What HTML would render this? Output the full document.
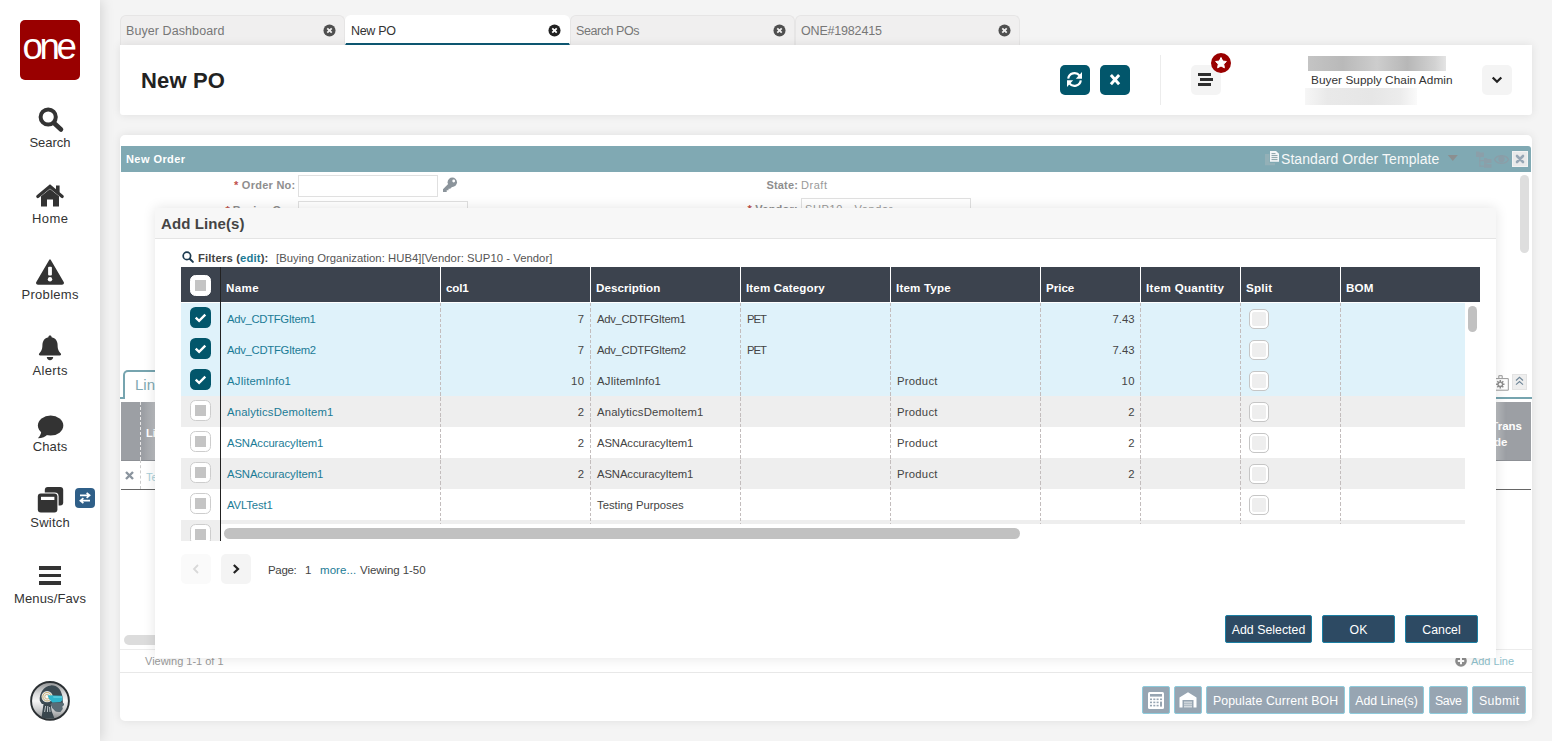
<!DOCTYPE html>
<html lang="en">
<head>
<meta charset="utf-8">
<title>New PO</title>
<style>
*{box-sizing:border-box;margin:0;padding:0}
html,body{width:1552px;height:741px;overflow:hidden}
body{background:#f4f4f4;font-family:"Liberation Sans",sans-serif;font-size:12px;color:#333;position:relative}
.abs{position:absolute}
.t{position:absolute;white-space:nowrap;line-height:1}
#side{position:absolute;left:0;top:0;width:100px;height:741px;background:#fff;box-shadow:2px 0 12px rgba(0,0,0,.13)}
#logo{position:absolute;left:20px;top:20px;width:60px;height:60px;background:#990000;border-radius:5px;overflow:hidden}
.nav{position:absolute;left:0;width:100px;text-align:center;font-size:13px;color:#333;line-height:1;white-space:nowrap}
.tab{position:absolute;top:15px;height:30px;width:225px;background:#f0efef;border:1px solid #e6e5e5;border-bottom:none;border-radius:6px 6px 0 0;color:#777}
.tab span{position:absolute;left:5px;top:8px;line-height:14px;white-space:nowrap}
.tab.on{background:#fff;color:#333;border-color:#fff;border-bottom:2px solid #0d5670;z-index:2}
.tab svg{position:absolute;right:8.500px;top:7.500px}
#hdr{position:absolute;left:120px;top:45px;width:1412px;height:70px;background:#fff;border-radius:0 0 3px 3px;box-shadow:0 0 10px rgba(0,0,0,.09)}
#main{position:absolute;left:120px;top:135px;width:1412px;height:586px;background:#fff;border-radius:5px;box-shadow:0 0 10px rgba(0,0,0,.09);overflow:hidden}
#dlg{position:absolute;left:155px;top:208px;width:1341px;height:450px;background:#fff;box-shadow:0 0 12px rgba(0,0,0,.11)}
.tbtn{position:absolute;height:28px;background:#97a5b2;border:1px solid #8ecbdc;border-radius:2px;color:#fff;line-height:28px;text-align:center;white-space:nowrap}
.dbtn{position:absolute;height:28px;background:#2d4a63;border:1px solid #1b7fa3;border-radius:2px;color:#fff;line-height:28px;text-align:center;white-space:nowrap}
.hc{position:absolute;top:0;height:35px;border-left:1px solid #fff;color:#fff;font-weight:700;line-height:35px;padding-left:5px;white-space:nowrap;padding-top:3px}
.row{position:absolute;left:0;height:31px;width:1284px}
.cell{position:absolute;top:0;height:31px;line-height:31px;color:#444;white-space:nowrap;padding-top:1px}
.lnk{color:#1b7b96}
.cb{position:absolute;width:21px;height:21px;border-radius:5.500px;background:#fff;border:1px solid #cdcdcd}
.cb i{position:absolute;left:4px;top:4px;width:11px;height:11px;background:#c4c4c4}
.cbon{position:absolute;width:21px;height:21px;border-radius:5.500px;background:#02566b}
.sp{position:absolute;width:20px;height:20px;border-radius:5px;background:#eee;border:1px solid #c6c6c6;box-shadow:inset 0 0 0 2px #fff}
.vd{position:absolute;top:0;width:1px;background:repeating-linear-gradient(180deg,#c3bdbd 0,#c3bdbd 3.250px,transparent 3.250px,transparent 5.250px)}
</style>
</head>
<body>
<div id="side">
  <div id="logo"><span class="t" style="left:-11.700px;top:8.500px;width:80px;text-align:center;font-size:36px;color:#fff;letter-spacing:-3.400px;transform:scaleX(1.02)">one</span></div>
  <svg class="abs" style="left:36px;top:105px" width="30" height="30" viewBox="0 0 30 30"><circle cx="12.200" cy="12" r="7.600" fill="none" stroke="#333" stroke-width="4"/><line x1="18" y1="18" x2="25" y2="24.500" stroke="#333" stroke-width="4.600" stroke-linecap="round"/></svg>
  <div class="nav" style="top:135.6px;letter-spacing:0.001px;padding-left:0.001px">Search</div>
  <svg class="abs" style="left:35px;top:184px" width="30" height="24" viewBox="0 0 30 24"><path d="M2.800 12.500 L15 2.400 L27.200 12.500" fill="none" stroke="#333" stroke-width="3.200" stroke-linecap="round" stroke-linejoin="miter"/><path d="M6 12.200 L15 5 L24 12.200 V22.500 H18 V15.500 H12 V22.500 H6 Z" fill="#333"/><rect x="21" y="1.500" width="3.600" height="7" fill="#333"/></svg>
  <div class="nav" style="top:211.6px;letter-spacing:0.48px;padding-left:0.48px">Home</div>
  <svg class="abs" style="left:35px;top:258px" width="30" height="28" viewBox="0 0 30 28"><path d="M15 2.200 L28 24.300 Q28.600 26 26.800 26 H3.200 Q1.400 26 2 24.300 Z" fill="#333" stroke="#333" stroke-width="1.600" stroke-linejoin="round"/><rect x="13.100" y="8.800" width="3.800" height="8.800" rx="1" fill="#fff"/><circle cx="15" cy="21.200" r="2.200" fill="#fff"/></svg>
  <div class="nav" style="top:287.6px;letter-spacing:0.299px;padding-left:0.299px">Problems</div>
  <svg class="abs" style="left:36px;top:334px" width="28" height="28" viewBox="0 0 28 28"><path d="M14 1.600 c1 0 1.600 .7 1.600 1.700 c4 .9 6 4 6 8 c0 4.500 1.400 6.400 3.200 8.200 c.7 .8 .2 2 -1 2 H4.200 c-1.200 0 -1.700 -1.200 -1 -2 c1.800 -1.800 3.200 -3.700 3.200 -8.200 c0 -4 2 -7.100 6 -8 c0 -1 .6 -1.700 1.600 -1.700 Z" fill="#333"/><path d="M10.800 23 h6.400 c0 1.800 -1.400 3.200 -3.200 3.200 s-3.200 -1.400 -3.200 -3.200 Z" fill="#333"/></svg>
  <div class="nav" style="top:363.6px;letter-spacing:0.345px;padding-left:0.345px">Alerts</div>
  <svg class="abs" style="left:36px;top:413.700px" width="30" height="26" viewBox="0 0 30 26"><path d="M5.500 16 Q5 21.500 1.800 24.200 Q8.500 24 11.500 20.500 Z" fill="#333"/><ellipse cx="14.600" cy="11.600" rx="12.700" ry="10" fill="#333"/></svg>
  <div class="nav" style="top:439.6px;letter-spacing:0.088px;padding-left:0.088px">Chats</div>
  <svg class="abs" style="left:36px;top:485px" width="30" height="30" viewBox="0 0 30 30"><rect x="8.800" y="2" width="18.400" height="18.600" rx="3" fill="#333"/><rect x="0.600" y="7.400" width="22" height="21.400" rx="4" fill="#fff"/><rect x="1.800" y="8.600" width="19.600" height="19" rx="3" fill="#333"/><rect x="5" y="11.800" width="13.400" height="3.200" fill="#fff"/></svg>
  <div class="abs" style="left:75px;top:488px;width:20px;height:20px;border-radius:4px;background:#2f5f88"></div>
  <svg class="abs" style="left:75px;top:488px" width="20" height="20" viewBox="0 0 20 20"><path d="M5 7.300 H13.200 M11.600 4.800 L14.600 7.300 L11.600 9.800" fill="none" stroke="#fff" stroke-width="1.700"/><path d="M15 12.700 H6.800 M8.400 10.200 L5.400 12.700 L8.400 15.200" fill="none" stroke="#fff" stroke-width="1.700"/></svg>
  <div class="nav" style="top:515.6px;letter-spacing:0.252px;padding-left:0.252px">Switch</div>
  <div class="abs" style="left:39px;top:566px;width:22px;height:3.600px;background:#333"></div>
  <div class="abs" style="left:39px;top:573.700px;width:22px;height:3.600px;background:#333"></div>
  <div class="abs" style="left:39px;top:581.400px;width:22px;height:3.600px;background:#333"></div>
  <div class="nav" style="top:591.6px;letter-spacing:0.13px;padding-left:0.13px">Menus/Favs</div>
  <svg class="abs" style="left:29px;top:680px" width="42" height="42" viewBox="0 0 42 42">
    <defs><linearGradient id="av" x1="0" y1="0" x2="0" y2="1"><stop offset="0" stop-color="#8f9192"/><stop offset=".3" stop-color="#d9dadb"/><stop offset=".5" stop-color="#f6f6f6"/><stop offset=".72" stop-color="#cfd0d1"/><stop offset="1" stop-color="#838687"/></linearGradient><clipPath id="avc"><circle cx="21" cy="20.900" r="18.600"/></clipPath></defs>
    <circle cx="21" cy="20.900" r="18.900" fill="url(#av)" stroke="#2b3033" stroke-width="1.900"/>
    <g clip-path="url(#avc)">
    <path d="M14.500 24 L12.400 38.500 L25.500 38.500 L22.600 31 L21.800 24 Z" fill="#39464d"/>
    <path d="M16.600 26 L15.600 32 M18.800 26 L18.400 32 M20.600 27 L21 32" stroke="#cfd6d8" stroke-width=".9"/>
    <path d="M10.800 20.800 C10 13 15 6 21.800 5.400 C28 5 32 9 33.500 16.700 L33.900 22.400 L35.100 24.800 L33.100 26.400 L33.500 28.900 L31.100 32.100 L26.600 31.300 L23.400 28.100 L21.800 24 L12.900 24 Z" fill="#3b4a52"/>
    <path d="M21.800 24 L23.400 28.100 L26.600 31.300 L31.100 32.100 L33.500 28.900 L33.100 26.400 L35.100 24.800 L33.900 22.400 L23.400 22.400 Z" fill="#5a6c75"/>
    <circle cx="18.100" cy="16.700" r="5.600" fill="#e8ebea"/>
    <circle cx="18.100" cy="16.700" r="4.300" fill="none" stroke="#c2a766" stroke-width=".9"/>
    <circle cx="18.100" cy="16.700" r="2.300" fill="#fbfbf6" stroke="#b99f63" stroke-width=".7"/>
    <path d="M18.500 15.300 L33.100 15.700 L33.500 20 L31.500 22 L23.400 22.400 L20.100 19.100 Z" fill="#2fb6cd"/>
    <path d="M24 16 L33 16.300 L33.200 18 L24.500 18 Z" fill="#6fd6e6" opacity=".6"/>
    </g>
  </svg>
</div>
<div id="tabs">
  <div class="tab" style="left:120px"><span style="font-size:12.500px;letter-spacing:0.081px">Buyer Dashboard</span><svg width="13" height="13" viewBox="0 0 14 14"><circle cx="7" cy="7" r="6.500" fill="#4f4f4f"/><path d="M4.600 4.600 L9.400 9.400 M9.400 4.600 L4.600 9.400" stroke="#f0efef" stroke-width="1.900"/></svg></div>
  <div class="tab on" style="left:345px"><span style="font-size:12.500px;letter-spacing:-0.307px">New PO</span><svg width="13" height="13" viewBox="0 0 14 14"><circle cx="7" cy="7" r="6.500" fill="#222"/><path d="M4.600 4.600 L9.400 9.400 M9.400 4.600 L4.600 9.400" stroke="#fff" stroke-width="1.900"/></svg></div>
  <div class="tab" style="left:570px"><span style="font-size:12.500px;letter-spacing:-0.439px">Search POs</span><svg width="13" height="13" viewBox="0 0 14 14"><circle cx="7" cy="7" r="6.500" fill="#4f4f4f"/><path d="M4.600 4.600 L9.400 9.400 M9.400 4.600 L4.600 9.400" stroke="#f0efef" stroke-width="1.900"/></svg></div>
  <div class="tab" style="left:795px"><span style="font-size:12.500px;letter-spacing:-0.182px">ONE#1982415</span><svg width="13" height="13" viewBox="0 0 14 14"><circle cx="7" cy="7" r="6.500" fill="#4f4f4f"/><path d="M4.600 4.600 L9.400 9.400 M9.400 4.600 L4.600 9.400" stroke="#f0efef" stroke-width="1.900"/></svg></div>
</div>
<div id="hdr">
  <div class="t" style="left:21px;top:25px;font-size:22px;color:#222;font-weight:700;letter-spacing:0.144px;">New PO</div>
  <div class="abs" style="left:940px;top:20px;width:30px;height:30px;border-radius:5px;background:#02566b"></div>
  <svg class="abs" style="left:940px;top:20px" width="30" height="30" viewBox="0 0 30 30"><path d="M8.200 13.650 A6.400 6.400 0 0 1 19.600 10.600" fill="none" stroke="#fff" stroke-width="2.200"/><path d="M22 7 V13.650 H15.800 Z" fill="#fff"/><path d="M20.800 15.350 A6.400 6.400 0 0 1 9.400 18.400" fill="none" stroke="#fff" stroke-width="2.200"/><path d="M7 22 V15.350 H13.200 Z" fill="#fff"/></svg>
  <div class="abs" style="left:980px;top:20px;width:30px;height:30px;border-radius:5px;background:#02566b"></div>
  <svg class="abs" style="left:980px;top:20px" width="30" height="30" viewBox="0 0 30 30"><path d="M10.900 10 L19.100 19.300 M19.100 10 L10.900 19.300" stroke="#fff" stroke-width="2.900"/></svg>
  <div class="abs" style="left:1040px;top:10px;width:1px;height:50px;background:#ececec"></div>
  <div class="abs" style="left:1071px;top:20px;width:30px;height:30px;border-radius:5px;background:#f4f4f4"></div>
  <div class="abs" style="left:1078px;top:28px;width:13px;height:2.600px;background:#2e2e2e"></div>
  <div class="abs" style="left:1080.200px;top:33.100px;width:12.800px;height:2.600px;background:#2e2e2e"></div>
  <div class="abs" style="left:1078px;top:38.400px;width:13px;height:2.600px;background:#2e2e2e"></div>
  <svg class="abs" style="left:1090px;top:7px" width="22" height="22" viewBox="0 0 22 22"><circle cx="11" cy="11" r="10" fill="#990000"/><path d="M11 5.500 L12.700 9 L16.400 9.500 L13.700 12.100 L14.400 15.800 L11 14 L7.600 15.800 L8.300 12.100 L5.600 9.500 L9.300 9 Z" fill="#fff" stroke="#fff" stroke-width="1" stroke-linejoin="round"/></svg>
  <div class="abs" style="left:1188px;top:11px;width:138px;height:15px;background:linear-gradient(90deg,#c4c4c4,#b9b9b9 25%,#cdcdcd 50%,#b7b7b7 72%,#d2d2d2 92%,#e4e4e4)"></div>
  <div class="t" style="left:1191px;top:30px;font-size:11.8px;color:#333;letter-spacing:0.051px;">Buyer Supply Chain Admin</div>
  <div class="abs" style="left:1185px;top:43px;width:112px;height:17px;background:linear-gradient(90deg,#f6f6f6,#e9e9e9 20%,#e6e6e6 60%,#ececec 85%,#fafafa)"></div>
  <div class="abs" style="left:1362px;top:20px;width:30px;height:30px;border-radius:5px;background:#f4f4f4"></div>
  <svg class="abs" style="left:1362px;top:20px" width="30" height="30" viewBox="0 0 30 30"><path d="M10.700 12.500 L15 16.700 L19.300 12.500" fill="none" stroke="#222" stroke-width="2.300"/></svg>
</div>
<div id="main">
  <div class="abs" style="left:1px;top:11px;width:1410px;height:26px;background:#80a9b3;border-radius:0 3px 0 0"></div>
  <div class="t" style="left:6px;top:18.8px;font-size:11px;color:#fff;font-weight:700;letter-spacing:0.43px;">New Order</div>
  <svg class="abs" style="left:1145px;top:14px" width="16" height="18" viewBox="0 0 16 18"><path d="M0 5 H4.500 V14 H10 V16.200 H0 Z" fill="#93b0b7"/><path d="M5 2 H11 L14 4.800 V12.700 H5 Z" fill="#f4f7f8"/><path d="M6.500 4.600 H10.500 M6.500 6.600 H12.500 M6.500 8.600 H12.500 M6.500 10.600 H12.500" stroke="#7c979e" stroke-width=".9"/></svg>
  <div class="t" style="left:1161px;top:17px;font-size:14px;color:#f6f8f8;letter-spacing:0.059px;">Standard Order Template</div>
  <svg class="abs" style="left:1327px;top:19px" width="12" height="8" viewBox="0 0 12 8"><path d="M.8 1 H10.800 L5.800 7 Z" fill="#8b8f90"/></svg>
  <svg class="abs" style="left:1355px;top:15px" width="36" height="18" viewBox="0 0 36 18"><g fill="#8b9fa9"><path d="M1 1.500 h3 l1 1 h4 v4.500 h-8z"/><path d="M9 8 h2.500 l1 1 h4 v4 h-7.500z"/><path d="M9 13.200 h2.500 l1 1 h4 v3.500 h-7.500z"/><path d="M4.200 7 h1.200 v8.500 h3.600 v1.200 h-4.800z"/><path d="M4.200 10 h4.800 v1.200 h-4.800z"/></g><path d="M19.500 9.500 C22 4.500 31 4.500 33.500 9.500 C31 14.500 22 14.500 19.500 9.500 Z" fill="none" stroke="#8a9ea8" stroke-width="1.500"/><circle cx="26.500" cy="9" r="3.200" fill="#8a9ea8"/></svg>
  <div class="abs" style="left:1392px;top:16px;width:16px;height:16px;background:#e9eaea;border:1px solid #f3f3f3"></div>
  <svg class="abs" style="left:1392px;top:16px" width="16" height="16" viewBox="0 0 16 16"><path d="M5 5 L11 11 M11 5 L5 11" stroke="#97a7b5" stroke-width="2.600" stroke-linecap="round"/></svg>
  <div class="abs" style="left:1400px;top:40px;width:9px;height:78px;border-radius:5px;background:#dedede"></div>
  <div class="t" style="left:-24.5px;top:44.8px;width:200px;text-align:right;font-size:11px;font-weight:700;color:#8e8e8e;letter-spacing:0.257px"><span style="color:#c0504d">*</span> Order No:</div>
  <div class="abs" style="left:178px;top:40px;width:140px;height:22px;border:1px solid #e0e0e0;background:#fff"></div>
  <svg class="abs" style="left:322px;top:42px" width="16" height="16" viewBox="0 0 16 16"><circle cx="10.300" cy="5.300" r="4.700" fill="#8b949b"/><path d="M6.600 6.400 L1 12.300 V14.900 H4.700 V13.300 H6.500 V11.700 H8.200 L10.800 9.300 Z" fill="#8b949b"/><circle cx="11.700" cy="4" r="1.400" fill="#fff"/></svg>
  <div class="t" style="left:-24.5px;top:70.3px;width:200px;text-align:right;font-size:11px;font-weight:700;color:#8e8e8e;letter-spacing:-0.068px"><span style="color:#c0504d">*</span> Buying Org:</div>
  <div class="abs" style="left:178px;top:66px;width:170px;height:22px;border:1px solid #e0e0e0;background:#fff"></div>
  <div class="t" style="left:478px;top:44.8px;width:200px;text-align:right;font-size:11px;font-weight:700;color:#8e8e8e;letter-spacing:0.156px">State:</div>
  <div class="t" style="left:681px;top:44.8px;font-size:11px;color:#999;letter-spacing:0.533px;">Draft</div>
  <div class="t" style="left:478px;top:68.5px;width:200px;text-align:right;font-size:11px;font-weight:700;color:#8e8e8e;letter-spacing:0.246px"><span style="color:#c0504d">*</span> Vendor:</div>
  <div class="abs" style="left:681px;top:63px;width:170px;height:22px;border:1px solid #e0e0e0;background:#fff"></div>
  <div class="t" style="left:685px;top:68.5px;font-size:11px;color:#999;letter-spacing:0.607px;">SUP10 - Vendor</div>
  <div class="abs" style="left:0;top:262px;width:1412px;height:2px;background:#76a4af"></div>
  <div class="abs" style="left:3px;top:235px;width:80px;height:29px;border:2px solid #76a4af;border-bottom:none;border-radius:5px 5px 0 0;background:#fff"></div>
  <div class="t" style="left:15px;top:242px;font-size:15px;color:#80a9b3;">Lines</div>
  <svg class="abs" style="left:1374px;top:239px" width="16" height="18" viewBox="0 0 16 18"><path d="M4.800 4.100 V1.700 H8.200 V4.100 M-2 4.600 H14.300 V16.200 H-2" fill="none" stroke="#9a9a9a" stroke-width="1"/><g stroke="#8f8f8f" stroke-width="1.500"><path d="M6.300 6.100 V14.500 M2.100 10.300 H10.500 M3.300 7.300 L9.300 13.300 M9.300 7.300 L3.300 13.300"/></g><circle cx="6.300" cy="10.300" r="2.900" fill="#8f8f8f"/><circle cx="6.300" cy="10.300" r="1.500" fill="#fff"/></svg>
  <div class="abs" style="left:1392px;top:239px;width:15px;height:15.500px;background:#eeeeee;border:1px solid #e3e3e3"></div>
  <svg class="abs" style="left:1392px;top:239px" width="15" height="16" viewBox="0 0 15 16"><path d="M4 6.500 L7.500 3.300 L11 6.500 M4 10.700 L7.500 7.500 L11 10.700" fill="none" stroke="#6f8698" stroke-width="1.100"/></svg>
  <div class="abs" style="left:1px;top:267px;width:1410px;height:58px;background:#9c9fa4"></div>
  <div class="abs" style="left:20px;top:267px;width:0;height:58px;border-left:1px dashed #e8e8e8"></div>
  <div class="t" style="left:26px;top:293px;font-size:11px;color:#fff;font-weight:700;">Line</div>
  <div class="t" style="left:1302px;top:282.8px;width:100px;text-align:right;font-size:11.500px;font-weight:700;color:#fff;line-height:16px">Trans</div>
  <div class="t" style="left:1287.5px;top:298.8px;width:100px;text-align:right;font-size:11.500px;font-weight:700;color:#fff;line-height:16px">Mode</div>
  <div class="abs" style="left:1376px;top:267px;width:10px;height:58px;background:linear-gradient(90deg,rgba(255,255,255,.3),rgba(255,255,255,0))"></div>
  <div class="abs" style="left:23px;top:267px;width:12px;height:58px;background:linear-gradient(270deg,rgba(255,255,255,.3),rgba(255,255,255,0))"></div>
  <div class="abs" style="left:1px;top:324.5px;width:1410px;height:1px;background:#8d9095"></div>
  <div class="abs" style="left:1px;top:354px;width:1410px;height:1px;background:#666"></div>
  <div class="abs" style="left:20px;top:325px;width:0;height:29px;border-left:1px dashed #ccc"></div>
  <svg class="abs" style="left:4px;top:335px" width="11" height="11" viewBox="0 0 11 11"><path d="M2 2 L9 9 M9 2 L2 9" stroke="#8a949e" stroke-width="2.400"/></svg>
  <div class="t" style="left:26px;top:337px;font-size:11px;color:#a9cfd9;">Test</div>
  <div class="abs" style="left:4px;top:500px;width:600px;height:10px;border-radius:5px;background:#dcdcdc"></div>
  <div class="abs" style="left:0;top:514px;width:1412px;height:1px;background:#ececec"></div>
  <div class="t" style="left:25px;top:521px;font-size:11px;color:#9a9a9a;letter-spacing:-0.011px;">Viewing 1-1 of 1</div>
  <svg class="abs" style="left:1335px;top:520px" width="12" height="12" viewBox="0 0 12 12"><circle cx="6" cy="6" r="5.800" fill="#8e8e8e"/><path d="M6 2.800 V9.200 M2.800 6 H9.200" stroke="#fff" stroke-width="2"/></svg>
  <div class="t" style="left:1351px;top:521px;font-size:11px;color:#8fbfcb;letter-spacing:-0.053px;">Add Line</div>
  <div class="abs" style="left:0;top:537px;width:1412px;height:1px;background:#e8e8e8"></div>
  <div class="tbtn" style="left:1086px;top:551px;width:139px;font-size:12.300px;letter-spacing:0.112px;padding-left:0.112px">Populate Current BOH</div>
  <div class="tbtn" style="left:1229px;top:551px;width:75px;font-size:12.300px;letter-spacing:-0.037px;padding-left:0px">Add Line(s)</div>
  <div class="tbtn" style="left:1308.5px;top:551px;width:39.5px;font-size:12.300px;letter-spacing:-0.384px;padding-left:0px">Save</div>
  <div class="tbtn" style="left:1352px;top:551px;width:54px;font-size:12.300px;letter-spacing:0.37px;padding-left:0.37px">Submit</div>
  <div class="tbtn" style="left:1022px;top:551px;width:28px"></div>
  <svg class="abs" style="left:1022px;top:551px" width="28" height="28" viewBox="0 0 28 28"><rect x="6" y="6" width="16" height="17" rx="1.500" fill="#fff"/><rect x="8" y="8" width="12" height="2.600" fill="#97a5b2"/><g fill="#97a5b2"><rect x="8" y="12.500" width="2" height="1.600"/><rect x="11.300" y="12.500" width="2" height="1.600"/><rect x="14.600" y="12.500" width="2" height="1.600"/><rect x="18" y="12.500" width="2" height="1.600"/><rect x="8" y="15.600" width="2" height="1.600"/><rect x="11.300" y="15.600" width="2" height="1.600"/><rect x="14.600" y="15.600" width="2" height="1.600"/><rect x="18" y="15.600" width="2" height="5"/><rect x="8" y="18.800" width="2" height="1.600"/><rect x="11.300" y="18.800" width="2" height="1.600"/><rect x="14.600" y="18.800" width="2" height="1.600"/></g></svg>
  <div class="tbtn" style="left:1054px;top:551px;width:28px"></div>
  <svg class="abs" style="left:1054px;top:551px" width="28" height="28" viewBox="0 0 28 28"><path d="M5.500 11.500 L14 6.200 L22.500 11.500 V21.500 H19.500 V14 H8.500 V21.500 H5.500 Z" fill="#fff"/><rect x="10" y="15.500" width="8" height="6" fill="#d5dbe0"/><path d="M10 17.300 H18 M10 19.300 H18" stroke="#97a5b2" stroke-width=".7"/></svg>
</div>
<div id="dlg">
  <div class="abs" style="left:0;top:0;width:1341px;height:31px;background:#f7f7f7;border-bottom:1px solid #e4e4e4"></div>
  <div class="t" style="left:6px;top:8px;font-size:15px;color:#444;font-weight:700;letter-spacing:0.091px;">Add Line(s)</div>
  <svg class="abs" style="left:26px;top:42px" width="14" height="14" viewBox="0 0 14 14"><circle cx="5.900" cy="5.900" r="3.700" fill="none" stroke="#1c3b50" stroke-width="1.700"/><path d="M8.700 8.700 L11.900 11.900" stroke="#1c3b50" stroke-width="2" stroke-linecap="round"/></svg>
  <div class="t" style="left:43px;top:44.8px;font-size:11.3px;color:#444;font-weight:700;letter-spacing:0.138px;">Filters (<span style="color:#1b7b96">edit</span>):</div>
  <div class="t" style="left:121px;top:44.8px;font-size:11.3px;color:#555;letter-spacing:0.039px;">[Buying Organization: HUB4][Vendor: SUP10 - Vendor]</div>
  <div class="abs" id="grid" style="left:26px;top:59px;width:1299px;height:274px;overflow:hidden">
    <div class="abs" style="left:0;top:0;width:1299px;height:35px;background:#3c434e"></div>
    <div class="hc" style="left:40px;width:219px;font-size:11.6px;letter-spacing:0.401px;border-left:none;">Name</div>
    <div class="hc" style="left:259px;width:150px;font-size:11.6px;letter-spacing:-0.153px;">col1</div>
    <div class="hc" style="left:409px;width:150px;font-size:11.6px;letter-spacing:0.053px;">Description</div>
    <div class="hc" style="left:559px;width:150px;font-size:11.6px;letter-spacing:0.119px;">Item Category</div>
    <div class="hc" style="left:709px;width:150px;font-size:11.6px;letter-spacing:0.168px;">Item Type</div>
    <div class="hc" style="left:859px;width:100px;font-size:11.6px;letter-spacing:-0.015px;">Price</div>
    <div class="hc" style="left:959px;width:100px;font-size:11.6px;letter-spacing:0.314px;">Item Quantity</div>
    <div class="hc" style="left:1059px;width:100px;font-size:11.6px;letter-spacing:0.234px;">Split</div>
    <div class="hc" style="left:1159px;width:140px;font-size:11.6px;letter-spacing:0.212px;">BOM</div>
    <div class="cb" style="left:9px;top:7.800px;border-color:#fff"><i></i></div>
    <div class="row" style="top:36px;background:#dff2fa"><div class="cbon" style="left:9px;top:4px"><svg width="21" height="21" viewBox="0 0 21 21"><path d="M5.700 10.600 L9.100 13.800 L15.300 7.600" fill="none" stroke="#fff" stroke-width="2.300"/></svg></div><div class="cell lnk" style="left:46px;font-size:11.3px;letter-spacing:-0.317px;">Adv_CDTFGItem1</div><div class="cell" style="left:259px;font-size:11.3px;letter-spacing:0.315px;width:144px;text-align:right;margin-left:0.315px;">7</div><div class="cell" style="left:416px;font-size:11.3px;letter-spacing:-0.317px;">Adv_CDTFGItem1</div><div class="cell" style="left:566px;font-size:11.3px;letter-spacing:-0.993px;">PET</div><div class="cell" style="left:859px;font-size:11.3px;letter-spacing:0.002px;width:94.5px;text-align:right;margin-left:0.002px;">7.43</div><div class="sp" style="left:1068px;top:6px"></div></div>
    <div class="row" style="top:67px;background:#dff2fa"><div class="cbon" style="left:9px;top:4px"><svg width="21" height="21" viewBox="0 0 21 21"><path d="M5.700 10.600 L9.100 13.800 L15.300 7.600" fill="none" stroke="#fff" stroke-width="2.300"/></svg></div><div class="cell lnk" style="left:46px;font-size:11.3px;letter-spacing:-0.295px;">Adv_CDTFGItem2</div><div class="cell" style="left:259px;font-size:11.3px;letter-spacing:0.315px;width:144px;text-align:right;margin-left:0.315px;">7</div><div class="cell" style="left:416px;font-size:11.3px;letter-spacing:-0.295px;">Adv_CDTFGItem2</div><div class="cell" style="left:566px;font-size:11.3px;letter-spacing:-0.993px;">PET</div><div class="cell" style="left:859px;font-size:11.3px;letter-spacing:0.002px;width:94.5px;text-align:right;margin-left:0.002px;">7.43</div><div class="sp" style="left:1068px;top:6px"></div></div>
    <div class="row" style="top:98px;background:#dff2fa"><div class="cbon" style="left:9px;top:4px"><svg width="21" height="21" viewBox="0 0 21 21"><path d="M5.700 10.600 L9.100 13.800 L15.300 7.600" fill="none" stroke="#fff" stroke-width="2.300"/></svg></div><div class="cell lnk" style="left:46px;font-size:11.3px;letter-spacing:0.099px;">AJIitemInfo1</div><div class="cell" style="left:259px;font-size:11.3px;letter-spacing:0.315px;width:144px;text-align:right;margin-left:0.315px;">10</div><div class="cell" style="left:416px;font-size:11.3px;letter-spacing:0.099px;">AJIitemInfo1</div><div class="cell" style="left:716px;font-size:11.3px;letter-spacing:0.251px;">Product</div><div class="cell" style="left:859px;font-size:11.3px;letter-spacing:0.315px;width:94.5px;text-align:right;margin-left:0.315px;">10</div><div class="sp" style="left:1068px;top:6px"></div></div>
    <div class="row" style="top:129px;background:#eeeeee"><div class="cb" style="left:9px;top:4.200px"><i></i></div><div class="cell lnk" style="left:46px;font-size:11.3px;letter-spacing:0.16px;">AnalyticsDemoItem1</div><div class="cell" style="left:259px;font-size:11.3px;letter-spacing:0.315px;width:144px;text-align:right;margin-left:0.315px;">2</div><div class="cell" style="left:416px;font-size:11.3px;letter-spacing:0.16px;">AnalyticsDemoItem1</div><div class="cell" style="left:716px;font-size:11.3px;letter-spacing:0.251px;">Product</div><div class="cell" style="left:859px;font-size:11.3px;letter-spacing:0.315px;width:94.5px;text-align:right;margin-left:0.315px;">2</div><div class="sp" style="left:1068px;top:6px"></div></div>
    <div class="row" style="top:160px;background:#ffffff"><div class="cb" style="left:9px;top:4.200px"><i></i></div><div class="cell lnk" style="left:46px;font-size:11.3px;letter-spacing:-0.104px;">ASNAccuracyItem1</div><div class="cell" style="left:259px;font-size:11.3px;letter-spacing:0.315px;width:144px;text-align:right;margin-left:0.315px;">2</div><div class="cell" style="left:416px;font-size:11.3px;letter-spacing:-0.104px;">ASNAccuracyItem1</div><div class="cell" style="left:716px;font-size:11.3px;letter-spacing:0.251px;">Product</div><div class="cell" style="left:859px;font-size:11.3px;letter-spacing:0.315px;width:94.5px;text-align:right;margin-left:0.315px;">2</div><div class="sp" style="left:1068px;top:6px"></div></div>
    <div class="row" style="top:191px;background:#eeeeee"><div class="cb" style="left:9px;top:4.200px"><i></i></div><div class="cell lnk" style="left:46px;font-size:11.3px;letter-spacing:-0.104px;">ASNAccuracyItem1</div><div class="cell" style="left:259px;font-size:11.3px;letter-spacing:0.315px;width:144px;text-align:right;margin-left:0.315px;">2</div><div class="cell" style="left:416px;font-size:11.3px;letter-spacing:-0.104px;">ASNAccuracyItem1</div><div class="cell" style="left:716px;font-size:11.3px;letter-spacing:0.251px;">Product</div><div class="cell" style="left:859px;font-size:11.3px;letter-spacing:0.315px;width:94.5px;text-align:right;margin-left:0.315px;">2</div><div class="sp" style="left:1068px;top:6px"></div></div>
    <div class="row" style="top:222px;background:#ffffff"><div class="cb" style="left:9px;top:4.200px"><i></i></div><div class="cell lnk" style="left:46px;font-size:11.3px;letter-spacing:-0.136px;">AVLTest1</div><div class="cell" style="left:416px;font-size:11.3px;letter-spacing:0.001px;">Testing Purposes</div><div class="sp" style="left:1068px;top:6px"></div></div>
    <div class="row" style="top:253px;background:#eeeeee"><div class="cb" style="left:9px;top:4.200px"><i></i></div><div class="sp" style="left:1068px;top:6px"></div></div>
    <div class="abs" style="left:39px;top:0;width:1px;height:274px;background:#222"></div>
    <div class="vd" style="left:259px;top:36px;height:221.500px"></div>
    <div class="vd" style="left:409px;top:36px;height:221.500px"></div>
    <div class="vd" style="left:559px;top:36px;height:221.500px"></div>
    <div class="vd" style="left:709px;top:36px;height:221.500px"></div>
    <div class="vd" style="left:859px;top:36px;height:221.500px"></div>
    <div class="vd" style="left:959px;top:36px;height:221.500px"></div>
    <div class="vd" style="left:1059px;top:36px;height:221.500px"></div>
    <div class="vd" style="left:1159px;top:36px;height:221.500px"></div>
    <div class="abs" style="left:40px;top:257px;width:1245px;height:17px;background:#fff"></div>
    <div class="abs" style="left:43px;top:261px;width:796px;height:11px;border-radius:6px;background:#c1c1c1"></div>
    <div class="abs" style="left:1284px;top:35px;width:15px;height:239px;background:#fff"></div>
    <div class="abs" style="left:1287px;top:39px;width:9px;height:26px;border-radius:5px;background:#c1c1c1"></div>
  </div>
  <div class="abs" style="left:26px;top:346px;width:30px;height:30px;border-radius:5px;background:#fafafa"></div>
  <svg class="abs" style="left:26px;top:346px" width="30" height="30" viewBox="0 0 30 30"><path d="M17 11 L13 15 L17 19" fill="none" stroke="#d9d9d9" stroke-width="1.800"/></svg>
  <div class="abs" style="left:66px;top:346px;width:30px;height:30px;border-radius:5px;background:#f4f4f4"></div>
  <svg class="abs" style="left:66px;top:346px" width="30" height="30" viewBox="0 0 30 30"><path d="M12.800 11 L17 15 L12.800 19" fill="none" stroke="#222" stroke-width="2.200"/></svg>
  <div class="t" style="left:113px;top:356.7px;font-size:11.5px;color:#444;letter-spacing:-0.311px;">Page:</div>
  <div class="t" style="left:150px;top:356.7px;font-size:11.5px;color:#444;">1</div>
  <div class="t" style="left:165px;top:356.7px;font-size:11.5px;color:#1b7b96;letter-spacing:0.059px;">more...</div>
  <div class="t" style="left:205px;top:356.7px;font-size:11.5px;color:#444;letter-spacing:-0.065px;">Viewing 1-50</div>
  <div class="dbtn" style="left:1070px;top:407px;width:87px;font-size:12.300px;letter-spacing:0.044px;padding-left:0.044px">Add Selected</div>
  <div class="dbtn" style="left:1167px;top:407px;width:73px;font-size:12.300px;letter-spacing:0.114px;padding-left:0.114px">OK</div>
  <div class="dbtn" style="left:1250px;top:407px;width:73px;font-size:12.300px;letter-spacing:0.002px;padding-left:0.002px">Cancel</div>
</div>
</body>
</html>
